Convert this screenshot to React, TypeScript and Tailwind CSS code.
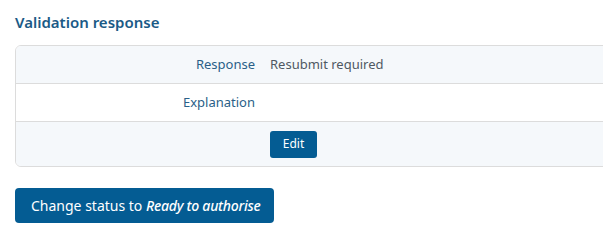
export default function App() {
  return (
    <div className="w-[603px] h-[252px] bg-white overflow-hidden pl-[15px] pt-[11px]" style={{ fontFamily: '"Noto Sans", sans-serif' }}>
      <h2 className="text-[15px] leading-[22px] font-semibold text-[#1b5a86]">Validation response</h2>
      <div className="mt-[12px] w-[620px] border border-[#dcdcdc] rounded-[6px] overflow-hidden">
        <div className="flex h-[38px] items-center bg-[#f5f8fb] border-b border-[#dcdcdc] text-[13px]">
          <div className="w-[239px] text-right text-[#2a5f88]">Response</div>
          <div className="pl-[15px] text-[#4f5863]">Resubmit required</div>
        </div>
        <div className="flex h-[38px] items-center bg-white border-b border-[#dcdcdc] text-[13px]">
          <div className="w-[239px] text-right text-[#2a5f88]">Explanation</div>
          <div className="pl-[15px] text-[#4f5863]"></div>
        </div>
        <div className="flex h-[44px] items-center bg-[#f5f8fb] text-[13px]">
          <div className="w-[239px]"></div>
          <div className="pl-[15px]">
            <button className="h-[27px] w-[47px] rounded-[3px] bg-[#045c93] text-white text-[12px]">Edit</button>
          </div>
        </div>
      </div>
      <button className="mt-[21px] h-[35px] pl-[16px] pr-[14px] rounded-[4px] bg-[#045c93] text-white text-[14px]">
        Change status to <span className="italic font-medium tracking-[-0.25px]">Ready to authorise</span>
      </button>
    </div>
  );
}
